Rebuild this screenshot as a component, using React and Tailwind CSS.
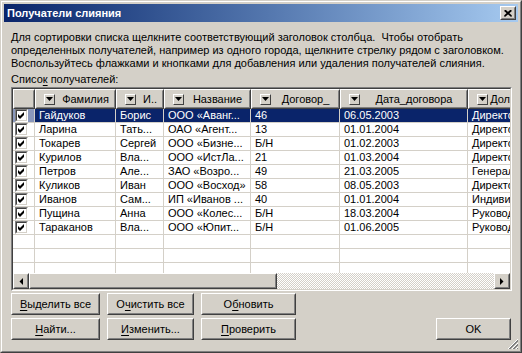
import React from "react";

const rows = [
  ["Гайдуков", "Борис", "ООО «Аванг...", "46", "06.05.2003", "Директор"],
  ["Ларина", "Тать...", "ОАО «Агент...", "13", "01.01.2004", "Директор"],
  ["Токарев", "Сергей", "ООО «Бизне...", "Б/Н", "01.02.2003", "Директор"],
  ["Курилов", "Вла...", "ООО «ИстЛа...", "21", "01.03.2004", "Директор"],
  ["Петров", "Але...", "ЗАО «Возро...", "49", "21.03.2005", "Генеральный"],
  ["Куликов", "Иван", "ООО «Восход»", "58", "08.05.2003", "Директор"],
  ["Иванов", "Сам...", "ИП «Иванов ...", "40", "01.01.2004", "Индивидуальный"],
  ["Пущина", "Анна", "ООО «Колес...", "Б/Н", "18.03.2004", "Руководитель"],
  ["Тараканов", "Вла...", "ООО «Юпит...", "Б/Н", "01.06.2005", "Руководитель"],
];

const widths = ["w-[81px]", "w-[48px]", "w-[87px]", "w-[89px]", "w-[128px]", "w-[80px]"];
const headers = ["Фамилия", "И..", "Название", "Договор_", "Дата_договора", "Должность"];

function Raised({ className = "", innerClassName = "", children }) {
  return (
    <div className={"border border-t-white border-l-white border-r-[#404040] border-b-[#404040] " + className}>
      <div className={"h-full w-full border border-t-[#d4d0c8] border-l-[#d4d0c8] border-r-[#808080] border-b-[#808080] " + innerClassName}>
        {children}
      </div>
    </div>
  );
}

function Sunken({ className = "", innerClassName = "", children }) {
  return (
    <div className={"border border-t-[#808080] border-l-[#808080] border-r-white border-b-white " + className}>
      <div className={"h-full w-full border border-t-[#404040] border-l-[#404040] border-r-[#d4d0c8] border-b-[#d4d0c8] " + innerClassName}>
        {children}
      </div>
    </div>
  );
}

function Checkbox() {
  return (
    <Sunken className="w-[13px] h-[13px] shrink-0" innerClassName="bg-white">
      <svg width="9" height="9" viewBox="0 0 9 9" className="block">
        <polygon points="1,3 3,5 7,1 7,4 3,8 1,6" fill="#000" />
      </svg>
    </Sunken>
  );
}

function DropBox() {
  return (
    <div className="w-[11px] h-[11px] shrink-0 border border-t-white border-l-white border-r-[#404040] border-b-[#404040] bg-[#d4d0c8] flex items-center justify-center">
      <svg width="7" height="4" viewBox="0 0 7 4" className="block">
        <polygon points="0,0 7,0 3.5,4" fill="#000" />
      </svg>
    </div>
  );
}

function Btn({ className = "", children }) {
  return (
    <Raised className={"h-[22px] " + className} innerClassName="flex items-center justify-center">
      <span className="leading-none">{children}</span>
    </Raised>
  );
}

function U({ children }) {
  return <span className="underline underline-offset-[2px]">{children}</span>;
}

export default function App() {
  return (
    <div className="w-[522px] h-[353px] overflow-hidden bg-white font-['Liberation_Sans',Arial,sans-serif] text-[11px] text-black">
      <div className="w-[522px] h-[353px] border border-t-[#d4d0c8] border-l-[#d4d0c8] border-r-[#404040] border-b-[#404040] bg-[#d4d0c8]">
        <div className="relative h-full w-full border border-t-white border-l-white border-r-[#808080] border-b-[#808080] p-[2px] flex flex-col">
          {/* Title bar */}
          <div className="h-[18px] shrink-0 bg-gradient-to-r from-[#0a246a] to-[#a6caf0] flex items-center pl-[3px] pr-[2px]">
            <span className="text-white font-bold text-[11px] leading-none flex-1">Получатели слияния</span>
            <Raised className="w-[16px] h-[14px]" innerClassName="bg-[#d4d0c8] flex items-center justify-center">
              <svg width="8" height="7" viewBox="0 0 8 7" className="block">
                <path d="M0.5 0.5 L7.5 6.5 M7.5 0.5 L0.5 6.5 M1.5 0.5 L7.5 6 M6.5 0.5 L0.5 6" stroke="#000" strokeWidth="1.3" />
              </svg>
            </Raised>
          </div>

          {/* Body */}
          <div className="flex-1 flex flex-col pl-[7px] pr-[6px] pt-[9px]">
            <p className="leading-[13px]">
              Для сортировки списка щелкните соответствующий заголовок столбца.&nbsp; Чтобы отобрать<br />
              определенных получателей, например из одного города, щелкните стрелку рядом с заголовком.<br />
              Воспользуйтесь флажками и кнопками для добавления или удаления получателей слияния.
            </p>
            <div className="leading-[13px] mt-[3px]">
              Списо<U>к</U> получателей:
            </div>

            {/* Grid */}
            <Sunken className="w-[501px] h-[204px] mt-[1px]" innerClassName="bg-white flex flex-col overflow-hidden">
              <div className="flex-1 overflow-hidden">
                {/* header */}
                <div className="flex h-[20px]">
                  <Raised className="w-[22px] shrink-0 bg-[#d4d0c8]" innerClassName="" />
                  {headers.map((h, i) => (
                    <Raised key={i} className={widths[i] + " shrink-0 bg-[#d4d0c8]"} innerClassName="flex items-center pl-[7px] overflow-hidden">
                      <DropBox />
                      <span className="flex-1 text-center whitespace-nowrap leading-none pl-[2px]">{h}</span>
                    </Raised>
                  ))}
                </div>
                {rows.map((r, ri) => {
                  const sel = ri === 0;
                  return (
                    <div key={ri} className="flex h-[14px] border-b border-[#d4d0c8]">
                      <div className={"w-[22px] shrink-0 border-r border-[#d4d0c8] flex items-center pl-[2px] " + (sel ? "bg-[#8a98bc]" : "")}>
                        <Checkbox />
                      </div>
                      {r.map((c, ci) => (
                        <div
                          key={ci}
                          className={
                            widths[ci] +
                            " shrink-0 border-r border-[#d4d0c8] pl-[4px] leading-[13px] whitespace-nowrap overflow-hidden " +
                            (sel ? "bg-[#0a246a] text-white" : "")
                          }
                        >
                          {c}
                        </div>
                      ))}
                    </div>
                  );
                })}
                {[0, 1, 2].map((k) => (
                  <div key={"e" + k} className="flex h-[14px] border-b border-[#d4d0c8]">
                    <div className="w-[22px] shrink-0 border-r border-[#d4d0c8]" />
                    {widths.map((w, ci) => (
                      <div key={ci} className={w + " shrink-0 border-r border-[#d4d0c8]"} />
                    ))}
                  </div>
                ))}
              </div>
              {/* horizontal scrollbar */}
              <div className="h-[16px] shrink-0 flex">
                <Raised className="w-[16px] h-[16px] shrink-0" innerClassName="bg-[#d4d0c8] flex items-center justify-center">
                  <svg width="4" height="7" viewBox="0 0 4 7" className="block">
                    <polygon points="4,0 4,7 0.5,3.5" fill="#000" />
                  </svg>
                </Raised>
                <Raised className="w-[248px] h-[16px] shrink-0" innerClassName="bg-[#d4d0c8]" />
                <div className="flex-1 bg-[repeating-conic-gradient(#d4d0c8_0_25%,#ffffff_0_50%)] bg-[length:2px_2px]" />
                <Raised className="w-[16px] h-[16px] shrink-0" innerClassName="bg-[#d4d0c8] flex items-center justify-center">
                  <svg width="4" height="7" viewBox="0 0 4 7" className="block">
                    <polygon points="0,0 0,7 3.5,3.5" fill="#000" />
                  </svg>
                </Raised>
              </div>
            </Sunken>

            {/* Buttons */}
            <div className="flex mt-[2px]">
              <div className="flex flex-col gap-[3px]">
                <div className="flex gap-[7px]">
                  <Btn className="w-[89px]"><U>В</U>ыделить все</Btn>
                  <Btn className="w-[87px]">О<U>ч</U>истить все</Btn>
                  <Btn className="w-[95px]">О<U>б</U>новить</Btn>
                </div>
                <div className="flex gap-[7px]">
                  <Btn className="w-[89px]"><U>Н</U>айти...</Btn>
                  <Btn className="w-[87px]"><U>И</U>зменить...</Btn>
                  <Btn className="w-[95px]"><U>П</U>роверить</Btn>
                </div>
              </div>
              <div className="flex-1 flex items-end justify-end">
                <Btn className="w-[75px] mr-[1px]">OK</Btn>
              </div>
            </div>
          </div>

          {/* resize grip */}
          <svg width="12" height="12" viewBox="0 0 12 12" className="absolute right-[1px] bottom-[1px]">
            <path d="M11 1 L1 11 M11 5 L5 11 M11 9 L9 11" stroke="#ffffff" strokeWidth="1" />
            <path d="M11 2 L2 11 M11 3 L3 11 M11 6 L6 11 M11 7 L7 11 M11 10 L10 11" stroke="#808080" strokeWidth="1" />
          </svg>
        </div>
      </div>
    </div>
  );
}
